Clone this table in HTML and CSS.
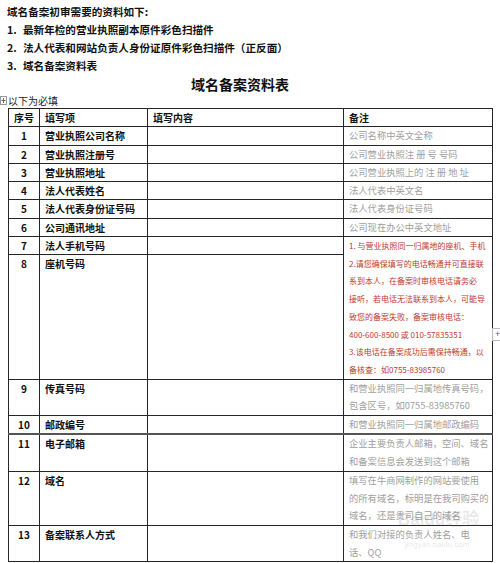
FILE: index.html
```html
<!DOCTYPE html>
<html lang="zh-CN">
<head>
<meta charset="utf-8">
<title>域名备案资料表</title>
<link rel="stylesheet" href="styles.css">
</head>
<body>
<div class="page">
  <div class="intro">
    <div class="line">域名备案初审需要的资料如下:</div>
    <div class="line"><span class="num">1.</span>最新年检的营业执照副本原件彩色扫描件</div>
    <div class="line"><span class="num">2.</span>法人代表和网站负责人身份证原件彩色扫描件（正反面）</div>
    <div class="line"><span class="num">3.</span>域名备案资料表</div>
  </div>
  <div class="title">域名备案资料表</div>
  <div class="note">
    <span class="handle"><svg width="7" height="9" viewBox="0 0 7 9"><rect x="0.5" y="0.5" width="6" height="8" fill="#fff" stroke="#999"/><path d="M3.5 2v5M1.5 4.5h4" stroke="#666" stroke-width="1"/></svg></span>
    <span>以下为必填</span>
  </div>
  <table class="grid">
    <colgroup>
      <col class="c1"><col class="c2"><col class="c3"><col class="c4">
    </colgroup>
    <tr class="head">
      <th class="no">序号</th><th>填写项</th><th>填写内容</th><th>备注</th>
    </tr>
    <tr><td class="no">1</td><td class="item">营业执照公司名称</td><td></td><td class="rem">公司名称中英文全称</td></tr>
    <tr><td class="no">2</td><td class="item">营业执照注册号</td><td></td><td class="rem">公司营业执照注 册 号 号码</td></tr>
    <tr><td class="no">3</td><td class="item">营业执照地址</td><td></td><td class="rem">公司营业执照上的 注 册 地 址</td></tr>
    <tr><td class="no">4</td><td class="item">法人代表姓名</td><td></td><td class="rem">法人代表中英文名</td></tr>
    <tr><td class="no">5</td><td class="item">法人代表身份证号码</td><td></td><td class="rem">法人代表身份证号码</td></tr>
    <tr><td class="no">6</td><td class="item">公司通讯地址</td><td></td><td class="rem">公司现在办公中英文地址</td></tr>
    <tr class="r7"><td class="no">7</td><td class="item">法人手机号码</td><td></td>
      <td class="red" rowspan="2">1. 与营业执照同一归属地的座机、手机<br>2.请您确保填写的电话畅通并可直接联<br>系到本人，在备案时审核电话请务必<br>接听，若电话无法联系到本人，可能导<br>致您的备案失败，备案审核电话：<br>400-600-8500 或 010-57835351<br>3.该电话在备案成功后需保持畅通，以<br>备核查：如0755-83985760</td></tr>
    <tr class="r8"><td class="no">8</td><td class="item">座机号码</td><td></td></tr>
    <tr class="multi"><td class="no">9</td><td class="item">传真号码</td><td></td><td class="rem">和营业执照同一归属地传真号码，<br>包含区号，如0755-83985760</td></tr>
    <tr class="thick"><td class="no">10</td><td class="item">邮政编号</td><td></td><td class="rem">和营业执照同一归属地邮政编码</td></tr>
    <tr class="multi"><td class="no">11</td><td class="item">电子邮箱</td><td></td><td class="rem">企业主要负责人邮箱，空间、域名<br>和备案信息会发送到这个邮箱</td></tr>
    <tr class="multi"><td class="no">12</td><td class="item">域名</td><td></td><td class="rem">填写在牛商网制作的网站要使用<br>的所有域名，标明是在我司购买的<br>域名，还是贵司自己的域名</td></tr>
    <tr class="multi"><td class="no">13</td><td class="item">备案联系人方式</td><td></td><td class="rem">和我们对接的负责人姓名、电<br>话、QQ</td></tr>
  </table>
  <div class="addbox">+</div>
  <div class="wm">Baidu经验</div>
  <div class="wm2">jingyan.baidu.com</div>
</div>
</body>
</html>
```
FILE: styles.css
```css
html, body {
  margin: 0;
  padding: 0;
  background: #ffffff;
}
.page {
  position: relative;
  width: 500px;
  height: 563px;
  overflow: hidden;
  font-family: "Noto Sans CJK SC", "Liberation Sans", sans-serif;
  color: #111;
}
.intro {
  padding: 3px 0 0 7px;
  font-size: 10.6px;
  font-weight: bold;
  line-height: 18px;
}
.num {
  display: inline-block;
  width: 16px;
}
.title {
  text-align: center;
  padding-right: 20px;
  font-size: 14px;
  font-weight: bold;
  line-height: 18px;
}
.note {
  display: flex;
  align-items: center;
  gap: 1px;
  font-size: 10px;
  line-height: 15px;
  height: 15px;
  color: #222;
}
.handle {
  display: flex;
  width: 7px;
}
.grid {
  margin-left: 8px;
  border-collapse: collapse;
  table-layout: fixed;
  width: 484px;
  font-size: 10px;
  line-height: 17.3px;
}
.c1 { width: 31px; }
.c2 { width: 108px; }
.c3 { width: 196px; }
.c4 { width: 149px; }
.grid th, .grid td {
  border: 1px solid #262626;
  padding: 0 0 0 5px;
  vertical-align: top;
  text-align: left;
  white-space: nowrap;
  overflow: hidden;
}
.grid th {
  font-weight: bold;
}
.grid .no {
  text-align: center;
  padding: 0;
  font-weight: bold;
}
.item {
  font-weight: bold;
}
.rem {
  color: #a0a0a0;
  font-size: 9.3px;
}
.multi .rem {
  line-height: 17.7px;
}
.red {
  color: #c0392f;
  font-size: 8px;
  line-height: 17.7px;
}
.r7 td {
  height: 17px;
}
.r8 td {
  height: 123px;
}
.thick td {
  border-bottom: 2px solid #555;
}
.addbox {
  position: absolute;
  left: 492px;
  top: 328px;
  width: 12px;
  height: 13px;
  border: 1px solid #bbb;
  box-sizing: border-box;
  background: #fff;
  color: #666;
  font-size: 9px;
  line-height: 11px;
  padding-left: 2px;
  font-family: "Liberation Sans", sans-serif;
}
.wm {
  position: absolute;
  left: 398px;
  top: 505px;
  font-size: 17px;
  font-family: "Liberation Sans", "Noto Sans CJK SC", sans-serif;
  color: rgba(120, 120, 120, 0.18);
  font-weight: bold;
}
.wm2 {
  position: absolute;
  left: 405px;
  top: 540px;
  font-size: 8px;
  font-family: "Liberation Sans", sans-serif;
  color: rgba(120, 120, 120, 0.2);
}
```
